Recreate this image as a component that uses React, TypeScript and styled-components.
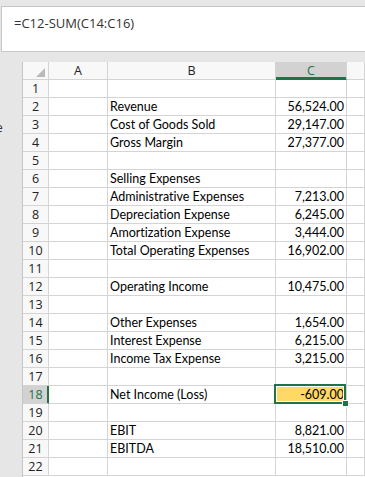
import React from 'react';
import styled, { createGlobalStyle, css } from 'styled-components';

const GlobalStyle = createGlobalStyle`
  body {
    margin: 0;
    background: #e6e6e6;
  }
`;

const Screen = styled.div`
  width: 365px;
  height: 477px;
  overflow: hidden;
  background: #e6e6e6;
  display: flex;
  flex-direction: column;
`;

const FormulaBar = styled.div`
  flex: none;
  height: 46px;
  margin: 6px -20px 0 1px;
  box-sizing: border-box;
  border: 1px solid #c6c6c6;
  background: #fff;
  padding: 7px 12px;
  font-family: 'Open Sans', sans-serif;
  font-size: 13px;
  line-height: 18px;
  color: #333;
`;

const SheetArea = styled.div`
  flex: 1;
  min-height: 0;
  margin-top: 10px;
  display: flex;
`;

const Gutter = styled.div`
  width: 22px;
  flex: none;
  overflow: hidden;
  padding-top: 57px;
  box-sizing: border-box;
  font-family: 'Open Sans', sans-serif;
  font-size: 12px;
  color: #333;
`;

const CutText = styled.span`
  display: block;
  margin-left: -4px;
`;

const Grid = styled.div`
  flex: 1;
  display: grid;
  grid-template-columns: 26px 59px 168px 71px 1fr;
  grid-auto-rows: 18px;
  align-content: start;
  border-left: 1px solid #c6c6c6;
  background: #fff;
`;

const lines = css`
  box-sizing: border-box;
  border-right: 1px solid #d4d4d4;
  border-bottom: 1px solid #d4d4d4;
`;

const HeadBase = styled.div<{ $selected?: boolean }>`
  ${lines};
  display: flex;
  align-items: center;
  justify-content: center;
  font-family: 'Open Sans', sans-serif;
  font-size: 12.5px;
  color: ${(p) => (p.$selected ? '#217346' : '#222')};
  background: ${(p) => (p.$selected ? '#d2d2d2' : '#f8f8f8')};
`;

const Corner = styled(HeadBase)`
  justify-content: flex-end;
  align-items: flex-end;
  padding: 0 3px 2px 0;
`;

const ColHead = styled(HeadBase)`
  ${(p) => p.$selected && 'box-shadow: inset 0 -2px 0 #217346; border-bottom-color: #217346;'}
`;

const RowHead = styled(HeadBase)`
  ${(p) => p.$selected && 'box-shadow: inset -1px 0 0 #217346; border-right-color: #217346;'}
`;

const Cell = styled.div<{ $right?: boolean; $selected?: boolean }>`
  ${lines};
  display: flex;
  align-items: flex-end;
  justify-content: ${(p) => (p.$right ? 'flex-end' : 'flex-start')};
  padding: 0 2px 1px 2px;
  font-family: Lato, 'Liberation Sans', sans-serif;
  font-size: 12.5px;
  font-variant-ligatures: none;
  line-height: 15px;
  color: #000;
  white-space: nowrap;
  ${(p) =>
    p.$selected &&
    css`
      position: relative;
      background: #ffd966;
      &::after {
        content: '';
        position: absolute;
        top: -2px;
        left: -2px;
        right: 0;
        bottom: -1px;
        border: 2px solid #217346;
        box-shadow: inset 0 0 0 1px #fff;
        z-index: 2;
      }
    `}
`;

const Handle = styled.span`
  position: absolute;
  right: -3px;
  bottom: -4px;
  width: 5px;
  height: 5px;
  background: #217346;
  border: 1px solid #fff;
  z-index: 3;
`;

const rows: Array<[string, string]> = [
  ['', ''],
  ['Revenue', '56,524.00'],
  ['Cost of Goods Sold', '29,147.00'],
  ['Gross Margin', '27,377.00'],
  ['', ''],
  ['Selling Expenses', ''],
  ['Administrative Expenses', '7,213.00'],
  ['Depreciation Expense', '6,245.00'],
  ['Amortization Expense', '3,444.00'],
  ['Total Operating Expenses', '16,902.00'],
  ['', ''],
  ['Operating Income', '10,475.00'],
  ['', ''],
  ['Other Expenses', '1,654.00'],
  ['Interest Expense', '6,215.00'],
  ['Income Tax Expense', '3,215.00'],
  ['', ''],
  ['Net Income (Loss)', '-609.00'],
  ['', ''],
  ['EBIT', '8,821.00'],
  ['EBITDA', '18,510.00'],
  ['', ''],
];

const SELECTED_ROW = 18;

const App: React.FC = () => {
  return (
    <Screen>
      <GlobalStyle />
      <FormulaBar>=C12-SUM(C14:C16)</FormulaBar>
      <SheetArea>
        <Gutter>
          <CutText>e</CutText>
        </Gutter>
        <Grid>
          <Corner>
            <svg width="9" height="9" viewBox="0 0 9 9">
              <polygon points="9,0 9,9 0,9" fill="#b9b9b9" />
            </svg>
          </Corner>
          <ColHead>A</ColHead>
          <ColHead>B</ColHead>
          <ColHead $selected>C</ColHead>
          <ColHead />
          {rows.map(([label, value], i) => {
            const n = i + 1;
            const sel = n === SELECTED_ROW;
            return (
              <React.Fragment key={n}>
                <RowHead $selected={sel}>{n}</RowHead>
                <Cell />
                <Cell>{label}</Cell>
                <Cell $right $selected={sel}>
                  {value}
                  {sel && <Handle />}
                </Cell>
                <Cell />
              </React.Fragment>
            );
          })}
        </Grid>
      </SheetArea>
    </Screen>
  );
};

export default App;
